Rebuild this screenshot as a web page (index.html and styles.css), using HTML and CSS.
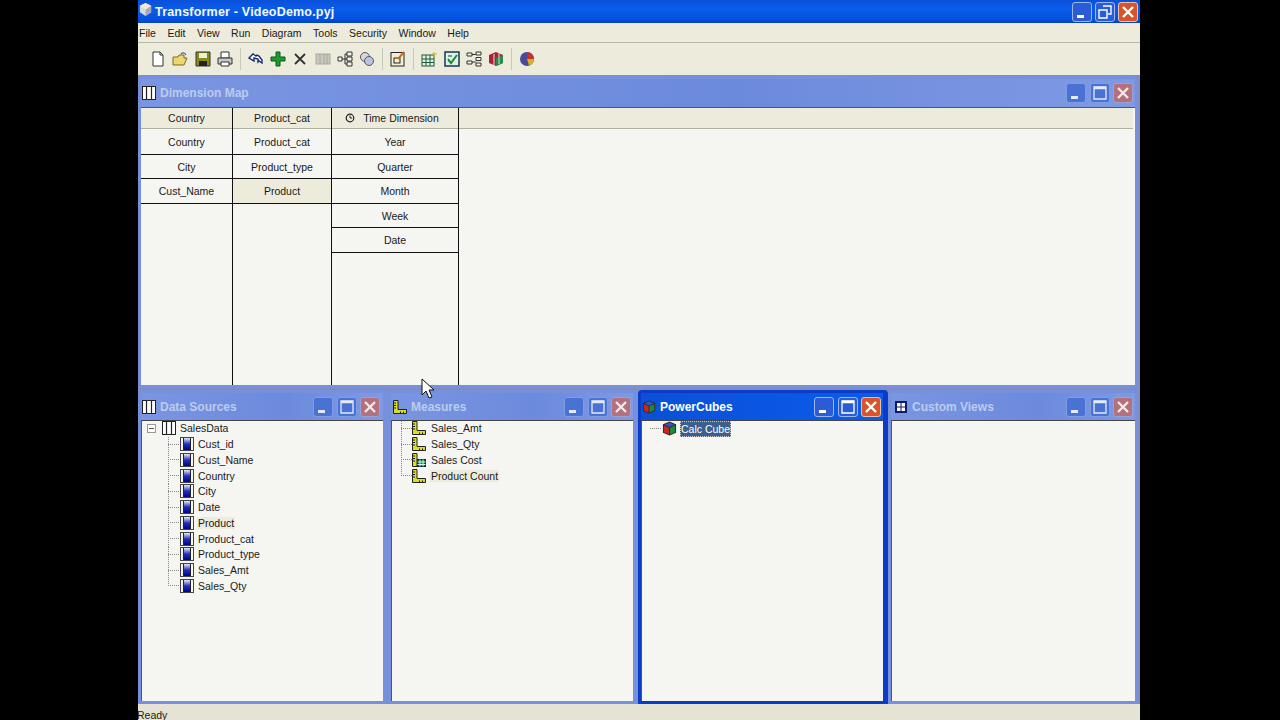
FILE: index.html
```html
<!DOCTYPE html>
<html lang="en">
<head>
<meta charset="utf-8">
<title>Transformer - VideoDemo.pyj</title>
<link rel="stylesheet" href="styles.css">
</head>
<body>
<svg class="defs" width="0" height="0" aria-hidden="true">
  <defs>
    <linearGradient id="colgrad" x1="0" y1="0" x2="0" y2="1"><stop offset="0" stop-color="#e8e8f4"/><stop offset="0.500" stop-color="#2030c0"/><stop offset="1" stop-color="#000090"/></linearGradient>
    <symbol id="i-dim" viewBox="0 0 14 14"><rect x="0.500" y="0.500" width="13" height="13" fill="#fff" stroke="#222"/><path d="M4.500 1v12M9.500 1v12" stroke="#222" stroke-width="1.200"/></symbol>
    <symbol id="i-col" viewBox="0 0 14 14"><rect x="0.500" y="0.500" width="13" height="13" fill="#f8f8e8" stroke="#444"/><rect x="4" y="1" width="6" height="12" fill="url(#colgrad)"/><path d="M3.500 1v12M10.500 1v12" stroke="#222"/></symbol>
    <symbol id="i-meas" viewBox="0 0 14 14"><path d="M0.500 0.500h4.500v9h8.500v4h-13z" fill="#dcdc28" stroke="#222"/><path d="M0.500 3h2.500M0.500 5.500h2.500M0.500 8h2.500M7.500 11.500v2M10.500 11.500v2" stroke="#222"/></symbol>
    <symbol id="i-calc" viewBox="0 0 14 14"><path d="M0.500 0.500h4.500v13h-4.500z" fill="#dcdc28" stroke="#222"/><path d="M0.500 3h2.500M0.500 5.500h2.500M0.500 8h2.500" stroke="#222"/><rect x="5.500" y="6.500" width="8" height="7" fill="#0d6a3a" stroke="#123"/><path d="M5.500 9h8M5.500 11.500h8M8 6.500v7M11 6.500v7" stroke="#cfe"/></symbol>
    <symbol id="i-cube" viewBox="0 0 16 16"><path d="M8 0.500l7 3v9L8 15.500l-7-3v-9z" fill="#2a2a2a"/><path d="M2 4.800l5.500 2.400v7L2 12z" fill="#c62828"/><path d="M8.500 7.200L14 4.800V12l-5.500 2.200z" fill="#1c8a3a"/><path d="M8 1.500l5.500 2.400L8 6.300 2.500 3.900z" fill="#2f55c8"/></symbol>
    <symbol id="i-grid4" viewBox="0 0 12 12"><rect width="12" height="12" fill="#0e1a66"/><path d="M2 2h3.500v3.500H2zM6.500 2H10v3.500H6.500zM2 6.500h3.500V10H2zM6.500 6.500H10V10H6.500z" fill="#fff"/></symbol>
    <symbol id="i-min" viewBox="0 0 20 20"><rect x="5" y="13" width="7" height="3" fill="#fff"/></symbol>
    <symbol id="i-max" viewBox="0 0 20 20"><path d="M4 4h12v12H4z" fill="none" stroke="#fff" stroke-width="1.300"/><path d="M4 5h12" stroke="#fff" stroke-width="2.500"/></symbol>
    <symbol id="i-close" viewBox="0 0 20 20"><path d="M5 5l10 10M15 5L5 15" stroke="#fff" stroke-width="2.400"/></symbol>
    <symbol id="i-restore" viewBox="0 0 20 20"><path d="M8 4h8v8h-3M4 8h8v8H4z" fill="none" stroke="#fff" stroke-width="1.400"/></symbol>
  </defs>
</svg>

<div class="app">
  <header class="titlebar">
    <svg class="app-icon" width="15" height="15" viewBox="0 0 16 16"><path d="M8 1l6 3v7l-6 4-6-4V4z" fill="#d8d8e0"/><path d="M8 8l6-4v7l-6 4z" fill="#a8a8b8"/><path d="M8 1l6 3-6 4-6-4z" fill="#f6e8dc"/></svg>
    <span class="app-title">Transformer - VideoDemo.pyj</span>
    <div class="caps app-caps">
      <span class="cap cap-blue"><svg width="20" height="20"><use href="#i-min"/></svg></span>
      <span class="cap cap-blue"><svg width="20" height="20"><use href="#i-restore"/></svg></span>
      <span class="cap cap-red"><svg width="20" height="20"><use href="#i-close"/></svg></span>
    </div>
  </header>

  <nav class="menubar">
    <span>File</span><span>Edit</span><span>View</span><span>Run</span><span>Diagram</span><span>Tools</span><span>Security</span><span>Window</span><span>Help</span>
  </nav>

  <div class="toolbar">
    <svg class="tb" viewBox="0 0 16 16"><path d="M3 1h7l3 3v11H3z" fill="#fff" stroke="#333"/><path d="M10 1v3h3" fill="none" stroke="#333"/></svg>
    <svg class="tb" viewBox="0 0 16 16"><path d="M1 6h5l1-2h5v3h3l-3 7H1z" fill="#ecd870" stroke="#7a6a20"/><path d="M9 3c2-2 4-1 5 1" fill="none" stroke="#3a6ab0" stroke-width="1.200"/></svg>
    <svg class="tb" viewBox="0 0 16 16"><path d="M1 1h14v14H1z" fill="#8a8a18" stroke="#333"/><rect x="4" y="2" width="8" height="5" fill="#eeeed8"/><rect x="4" y="10" width="8" height="5" fill="#222"/></svg>
    <svg class="tb" viewBox="0 0 16 16"><path d="M4 1h8v6H4z" fill="#fff" stroke="#333"/><path d="M1 7h14v6H1z" fill="#c8c8c8" stroke="#333"/><path d="M4 11h8v4H4z" fill="#fff" stroke="#333"/></svg>
    <i class="sep"></i>
    <svg class="tb" viewBox="0 0 16 16"><path d="M1 7l4-4 3 2 1-1 2 1 3 4v3l-3-2-1 1V8L6 7v3z" fill="#fff" stroke="#1a2a70" stroke-width="1.400"/></svg>
    <svg class="tb" viewBox="0 0 16 16"><path d="M6 1h4v5h5v4h-5v5H6v-5H1V6h5z" fill="#1f9a2f" stroke="#0c5a18"/></svg>
    <svg class="tb" viewBox="0 0 16 16"><path d="M3 3l10 10M13 3L3 13" stroke="#333" stroke-width="1.800"/></svg>
    <svg class="tb" viewBox="0 0 16 16"><rect x="1" y="3" width="14" height="10" fill="#c8c8c0" stroke="#a8a8a0"/><path d="M5 3v10M9 3v10M12 3v10" stroke="#a8a8a0"/></svg>
    <svg class="tb" viewBox="0 0 16 16"><path d="M1 6h4v4H1zM10 1h5v4h-5zM10 6h5v4h-5zM10 11h5v4h-5z" fill="#f4f4ea" stroke="#333"/><path d="M5 8h3M8 3v10M8 3h2M8 8h2M8 13h2" fill="none" stroke="#333"/></svg>
    <svg class="tb" viewBox="0 0 16 16"><circle cx="6" cy="6" r="4.500" fill="#d8d8d8" stroke="#556"/><circle cx="10" cy="10" r="4.500" fill="#b8c4e0" stroke="#556"/></svg>
    <i class="sep"></i>
    <svg class="tb" viewBox="0 0 16 16"><rect x="1" y="1.500" width="13" height="13.500" fill="#f4f0c8" stroke="#223"/><rect x="4" y="7" width="6" height="5" fill="none" stroke="#223"/><path d="M8 8l6-7" stroke="#c86a20" stroke-width="2"/></svg>
    <i class="sep"></i>
    <svg class="tb" viewBox="0 0 16 16"><rect x="1" y="4" width="12" height="11" fill="#e8f0e0" stroke="#1a5a40"/><path d="M1 8h12M1 11.500h12M5 4v11M9 4v11" stroke="#1a5a40"/><path d="M13 1v5M11 3h5" stroke="#c8b820"/></svg>
    <svg class="tb" viewBox="0 0 16 16"><rect x="1" y="1" width="14" height="14" fill="#dff0e8" stroke="#123a50" stroke-width="1.500"/><path d="M4 5h4M4 10h2" stroke="#123a50"/><path d="M4 8l3 4 6-8" fill="none" stroke="#1a8a30" stroke-width="2"/></svg>
    <svg class="tb" viewBox="0 0 16 16"><path d="M1 2h5v3H1zM10 1h5v3h-5zM10 6.500h5v3h-5zM10 12h5v3h-5zM1 10h5v3H1z" fill="#f4f4ea" stroke="#333"/><path d="M6 3.500h4M6 11h4" stroke="#333"/></svg>
    <svg class="tb" viewBox="0 0 16 16"><path d="M8 1l7 3v8l-7 3-7-3V4z" fill="#b02030"/><path d="M8 7l7-3v8l-7 3z" fill="#2a8a4a"/><path d="M5 3h2v11H5zM10 2h2v11h-2z" fill="#c8c8c8" opacity=".6"/></svg>
    <i class="sep"></i>
    <svg class="tb" viewBox="0 0 16 16"><circle cx="8" cy="8" r="7" fill="#4a4a9a"/><path d="M8 8V1a7 7 0 0 1 7 7z" fill="#c83030"/><path d="M8 8h7a7 7 0 0 1-5 6.500z" fill="#d8b020"/></svg>
  </div>

  <main class="workspace">
    <section class="win win-map">
      <div class="win-title">
        <svg class="win-icon" width="14" height="14"><use href="#i-dim"/></svg>
        <span class="win-name">Dimension Map</span>
        <div class="caps">
          <span class="cap cap-soft"><svg width="20" height="20"><use href="#i-min"/></svg></span>
          <span class="cap cap-soft"><svg width="20" height="20"><use href="#i-max"/></svg></span>
          <span class="cap cap-rose"><svg width="20" height="20"><use href="#i-close"/></svg></span>
        </div>
      </div>
      <div class="map-body">
        <div class="map-col col-1">
          <div class="map-head">Country</div>
          <div class="map-cell">Country</div>
          <div class="map-cell">City</div>
          <div class="map-cell">Cust_Name</div>
        </div>
        <div class="map-col col-2">
          <div class="map-head">Product_cat</div>
          <div class="map-cell">Product_cat</div>
          <div class="map-cell">Product_type</div>
          <div class="map-cell selected">Product</div>
        </div>
        <div class="map-col col-3">
          <div class="map-head"><svg class="clock" width="10" height="10" viewBox="0 0 10 10"><circle cx="5" cy="5" r="3.800" fill="none" stroke="#222" stroke-width="1.200"/><path d="M5 2.500V5h2.200" fill="none" stroke="#222"/></svg>Time Dimension</div>
          <div class="map-cell">Year</div>
          <div class="map-cell">Quarter</div>
          <div class="map-cell">Month</div>
          <div class="map-cell">Week</div>
          <div class="map-cell">Date</div>
        </div>
        <div class="map-col col-rest">
          <div class="map-head"></div>
        </div>
      </div>
    </section>

    <div class="lower">
      <section class="win win-first">
        <div class="win-title">
          <svg class="win-icon" width="14" height="14"><use href="#i-dim"/></svg>
          <span class="win-name">Data Sources</span>
          <div class="caps">
            <span class="cap cap-soft"><svg width="20" height="20"><use href="#i-min"/></svg></span>
            <span class="cap cap-soft"><svg width="20" height="20"><use href="#i-max"/></svg></span>
            <span class="cap cap-rose"><svg width="20" height="20"><use href="#i-close"/></svg></span>
          </div>
        </div>
        <div class="tree">
          <div class="row root"><i class="expander"></i><svg width="14" height="14"><use href="#i-dim"/></svg><span>SalesData</span></div>
          <div class="row child"><svg width="14" height="14"><use href="#i-col"/></svg><span>Cust_id</span></div>
          <div class="row child"><svg width="14" height="14"><use href="#i-col"/></svg><span>Cust_Name</span></div>
          <div class="row child"><svg width="14" height="14"><use href="#i-col"/></svg><span>Country</span></div>
          <div class="row child"><svg width="14" height="14"><use href="#i-col"/></svg><span>City</span></div>
          <div class="row child"><svg width="14" height="14"><use href="#i-col"/></svg><span>Date</span></div>
          <div class="row child"><svg width="14" height="14"><use href="#i-col"/></svg><span class="hl">Product</span></div>
          <div class="row child"><svg width="14" height="14"><use href="#i-col"/></svg><span>Product_cat</span></div>
          <div class="row child"><svg width="14" height="14"><use href="#i-col"/></svg><span>Product_type</span></div>
          <div class="row child"><svg width="14" height="14"><use href="#i-col"/></svg><span>Sales_Amt</span></div>
          <div class="row child"><svg width="14" height="14"><use href="#i-col"/></svg><span>Sales_Qty</span></div>
        </div>
      </section>

      <section class="win">
        <div class="win-title">
          <svg class="win-icon meas-icon" width="14" height="14"><use href="#i-meas"/></svg>
          <span class="win-name">Measures</span>
          <div class="caps">
            <span class="cap cap-soft"><svg width="20" height="20"><use href="#i-min"/></svg></span>
            <span class="cap cap-soft"><svg width="20" height="20"><use href="#i-max"/></svg></span>
            <span class="cap cap-rose"><svg width="20" height="20"><use href="#i-close"/></svg></span>
          </div>
        </div>
        <div class="tree">
          <div class="row measure"><svg width="14" height="14"><use href="#i-meas"/></svg><span>Sales_Amt</span></div>
          <div class="row measure"><svg width="14" height="14"><use href="#i-meas"/></svg><span>Sales_Qty</span></div>
          <div class="row measure"><svg width="14" height="14"><use href="#i-calc"/></svg><span>Sales Cost</span></div>
          <div class="row measure"><svg width="14" height="14"><use href="#i-meas"/></svg><span class="hl">Product Count</span></div>
        </div>
      </section>

      <section class="win win-active">
        <div class="win-title">
          <svg class="win-icon" width="14" height="14"><use href="#i-cube"/></svg>
          <span class="win-name">PowerCubes</span>
          <div class="caps">
            <span class="cap cap-blue"><svg width="20" height="20"><use href="#i-min"/></svg></span>
            <span class="cap cap-blue"><svg width="20" height="20"><use href="#i-max"/></svg></span>
            <span class="cap cap-red"><svg width="20" height="20"><use href="#i-close"/></svg></span>
          </div>
        </div>
        <div class="tree">
          <div class="row cube"><svg width="15" height="15"><use href="#i-cube"/></svg><span class="sel">Calc Cube</span></div>
        </div>
      </section>

      <section class="win win-last">
        <div class="win-title">
          <svg class="win-icon grid-icon" width="12" height="12"><use href="#i-grid4"/></svg>
          <span class="win-name">Custom Views</span>
          <div class="caps">
            <span class="cap cap-soft"><svg width="20" height="20"><use href="#i-min"/></svg></span>
            <span class="cap cap-soft"><svg width="20" height="20"><use href="#i-max"/></svg></span>
            <span class="cap cap-rose"><svg width="20" height="20"><use href="#i-close"/></svg></span>
          </div>
        </div>
        <div class="tree"></div>
      </section>
    </div>
  </main>

  <footer class="statusbar">Ready</footer>

  <svg class="pointer" width="14" height="21" viewBox="0 0 14 21"><path d="M1 1v16l4-4 3 7 3-1-3-7h5z" fill="#fff" stroke="#111"/></svg>
</div>
</body>
</html>
```
FILE: styles.css
```css
* { box-sizing: border-box; }
html, body { margin: 0; height: 100%; }
body {
  background: #000;
  overflow: hidden;
  font-family: "Liberation Sans", Arial, sans-serif;
  font-size: 10.500px;
  color: #1a1a1a;
}
.defs { position: absolute; }
.app {
  position: relative;
  margin-left: 138px;
  width: 1002px;
  height: 720px;
  display: flex;
  flex-direction: column;
  background: #ecebdc;
}
.titlebar {
  height: 23px;
  flex: none;
  display: flex;
  align-items: center;
  background: linear-gradient(#0a50d8, #0a5cec 40%, #0352de 85%, #0240b8);
}
.app-icon { flex: none; margin-top: -4px; }
.app-title {
  margin-left: 2px;
  color: #f4f8ff;
  font-size: 12.500px;
  font-weight: 700;
  letter-spacing: 0.200px;
}
.caps { margin-left: auto; display: flex; gap: 3.500px; }
.app-caps { margin-right: 2px; gap: 3px; }
.cap {
  width: 20px;
  height: 20px;
  border-radius: 3px;
  display: flex;
  border: 1px solid #9db8f0;
}
.cap-blue { background: #2a5cd8; }
.cap-red { background: #d8542c; border-color: #e8c0b0; }
.cap-soft { background: #4a72d4; border-color: #7f9ce4; }
.cap-rose { background: #b4707c; border-color: #9aa0d8; }
.cap-soft svg, .cap-rose svg { opacity: 0.85; }
.cap svg { margin: -1px; flex: none; }

.menubar {
  height: 20px;
  flex: none;
  display: flex;
  align-items: center;
  gap: 11.500px;
  padding-left: 1px;
  border-bottom: 1px solid #b8b8a8;
}
.toolbar {
  height: 32px;
  flex: none;
  display: flex;
  align-items: center;
  padding-left: 12px;
  gap: 6.300px;
}
.tb { width: 16px; height: 16px; flex: none; }
.sep { width: 1px; height: 22px; background: #c8c8b8; flex: none; margin: 0 0.700px; }

.workspace {
  flex: 1;
  min-height: 0;
  display: flex;
  flex-direction: column;
  padding-top: 1px;
  background: #7f8cc8;
}
.win {
  display: flex;
  flex-direction: column;
  border: 3px solid #7790dc;
  border-radius: 4px 4px 0 0;
  background: #7790dc;
  min-width: 0;
}
.win-map { height: 312px; flex: none; width: 1000px; }
.win-title {
  height: 28px;
  flex: none;
  display: flex;
  align-items: center;
  padding: 0 2px 0 1px;
  background: linear-gradient(90deg, #7a96e2, #6c8adc 60%, #7f9ae4);
  color: #bccbee;
  font-weight: 700;
  font-size: 12px;
}
.win-icon { flex: none; }
.win-name { margin-left: 4px; }
.meas-icon { margin-left: 1px; }
.win-active { border-color: #0a3cc8; background: #0a3cc8; }
.win-active .win-title { background: linear-gradient(90deg, #0a50d8, #0a5cec); color: #fff; }
.grid-icon { margin: 0 1px 0 3px; }

.map-body {
  flex: 1;
  display: flex;
  background: #f5f5f1;
  border-top: 1px solid #555;
  min-height: 0;
}
.map-col { display: flex; flex-direction: column; border-right: 1px solid #111; }
.col-1 { width: 92px; }
.col-2 { width: 99px; }
.col-3 { width: 127px; }
.col-3 .map-head { padding-right: 6px; }
.col-rest { flex: 1; border-right: 0; padding-right: 2px; }
.map-head {
  height: 21px;
  flex: none;
  background: #ecebdc;
  border-bottom: 1px solid #b0b0a0;
  display: flex;
  align-items: center;
  justify-content: center;
  margin-bottom: 1.400px;
}
.clock { margin-right: 8px; }
.map-cell {
  height: 24.500px;
  flex: none;
  display: flex;
  align-items: center;
  justify-content: center;
  border-bottom: 1px solid #111;
}
.selected { background: #ecebdc; }

.lower {
  flex: 1;
  min-height: 0;
  display: grid;
  grid-template-columns: repeat(4, 250px);
  width: 1000px;
}
.lower .win { margin-top: 2px; border-right-width: 5px; }
.lower .win-last { border-right-width: 3px; }
.win-first .win-title { padding-right: 3px; }
.tree {
  flex: 1;
  background: #f5f5f1;
  border-left: 1px solid #555;
  border-top: 1px solid #444;
  margin-top: -1px;
  min-height: 0;
}
.row {
  height: 15.750px;
  display: flex;
  align-items: center;
  gap: 4px;
  --dot-h: repeating-linear-gradient(90deg, #888 0 1px, transparent 1px 2px);
  --dot-v: repeating-linear-gradient(0deg, #888 0 1px, transparent 1px 2px);
  background-repeat: no-repeat;
}
.row:first-child { margin-top: -0.500px; }
.row svg { flex: none; }
.root { padding-left: 5px; }
.expander {
  width: 9px;
  height: 9px;
  flex: none;
  border: 1px solid #999;
  background: linear-gradient(#555, #555) center / 5px 1px no-repeat #fff;
  margin-right: 2px;
}
.child {
  padding-left: 38px;
  background-image: var(--dot-h), var(--dot-v);
  background-size: 12px 1px, 1px 100%;
  background-position: 26px 50%, 26px 0;
}
.child:last-child { background-size: 12px 1px, 1px 50%; }
.measure {
  padding-left: 20px;
  gap: 5px;
  background-image: var(--dot-h), var(--dot-v);
  background-size: 11px 1px, 1px 100%;
  background-position: 9px 50%, 9px 0;
}
.measure:last-child { background-size: 11px 1px, 1px 50%; }
.cube {
  padding-left: 20px;
  height: 16px;
  background-image: var(--dot-h);
  background-size: 12px 1px;
  background-position: 8px 50%;
}
.hl { background: #ecebdc; padding: 0 1px; margin-left: -1px; }
.sel { background: #3a6090; color: #fff; padding: 1px 0; border: 1px dotted #ccc; margin-left: -1px; }

.statusbar {
  height: 16px;
  flex: none;
  overflow: hidden;
  line-height: 11px;
  padding-top: 6px;
  text-indent: -1px;
  background: #e4e3d4;
}
.pointer { position: absolute; left: 283px; top: 378px; }
```
